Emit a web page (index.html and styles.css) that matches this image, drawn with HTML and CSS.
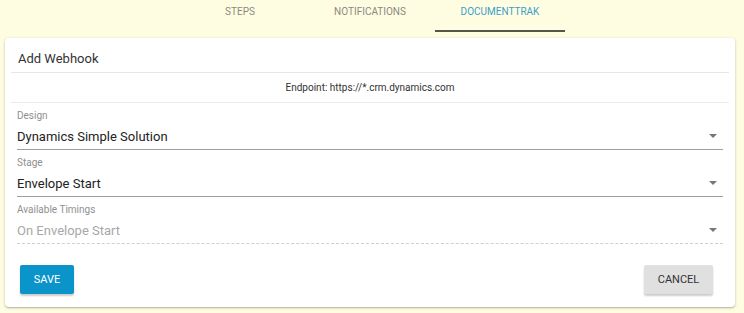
FILE: index.html
```html
<!DOCTYPE html>
<html>
<head>
<meta charset="utf-8">
<link rel="stylesheet" href="styles.css">
</head>
<body>
<nav class="tabs">
  <div class="tab">STEPS</div>
  <div class="tab">NOTIFICATIONS</div>
  <div class="tab active">DOCUMENTTRAK</div>
</nav>
<section class="card">
  <div class="card-title">Add Webhook</div>
  <div class="endpoint">Endpoint: https://*.crm.dynamics.com</div>
  <div class="fields">
    <div class="field">
      <div class="label">Design</div>
      <div class="select"><span>Dynamics Simple Solution</span><span class="arrow"></span></div>
    </div>
    <div class="field">
      <div class="label">Stage</div>
      <div class="select"><span>Envelope Start</span><span class="arrow"></span></div>
    </div>
    <div class="field disabled">
      <div class="label">Available Timings</div>
      <div class="select"><span>On Envelope Start</span><span class="arrow"></span></div>
    </div>
  </div>
  <div class="actions">
    <button class="btn primary">SAVE</button>
    <button class="btn secondary">CANCEL</button>
  </div>
</section>
</body>
</html>
```
FILE: styles.css
```css
* { box-sizing: border-box; }
body {
  margin: 0;
  background: #fffde1;
  font-family: Roboto, "Liberation Sans", sans-serif;
  color: #212121;
}
.tabs {
  display: flex;
  justify-content: center;
  padding-right: 4px;
  height: 32px;
}
.tab {
  width: 130px;
  text-align: center;
  font-size: 10px;
  line-height: 24px;
  color: #8a8a80;
  border-bottom: 2px solid transparent;
  height: 32px;
}
.tab.active {
  color: #3d9dc9;
  border-bottom-color: #55574b;
}
.card {
  margin: 6px 9px 7px 5px;
  background: #fff;
  border-radius: 4px;
  box-shadow: 0 1px 3px rgba(0,0,0,0.22), 0 1px 1px rgba(0,0,0,0.12);
  padding: 0 6px 13px;
}
.card-title {
  font-size: 13px;
  padding: 9px 7px 0;
  line-height: 24px;
  height: 35px;
  border-bottom: 1px solid #e6e6e6;
  color: #333;
}
.endpoint {
  font-size: 10px;
  text-align: center;
  height: 30px;
  line-height: 29px;
  border-bottom: 1px solid #ececec;
  color: #333;
}
.fields {
  padding: 0 6px;
}
.field {
  padding-top: 6px;
}
.label {
  font-size: 10px;
  line-height: 14px;
  color: #8f8f8f;
}
.select {
  display: flex;
  justify-content: space-between;
  align-items: center;
  height: 27px;
  font-size: 13px;
  color: #222;
  border-bottom: 1px solid #9e9e9e;
  padding-right: 6px;
}
.arrow {
  width: 0;
  height: 0;
  border-left: 4px solid transparent;
  border-right: 4px solid transparent;
  border-top: 4px solid #777;
}
.field.disabled .select {
  color: #a8a8a8;
  border-bottom: 1px dashed #cfcfcf;
}
.actions {
  display: flex;
  justify-content: space-between;
  padding: 21px 16px 0 9px;
}
.btn {
  font-family: Roboto, "Liberation Sans", sans-serif;
  font-size: 11px;
  height: 29px;
  border: none;
  border-radius: 2px;
  box-shadow: 0 2px 2px rgba(0,0,0,0.2);
}
.primary {
  background: #0a94c9;
  color: #fff;
  width: 54px;
}
.secondary {
  background: #e0e0e0;
  color: #333;
  width: 69px;
}
```
